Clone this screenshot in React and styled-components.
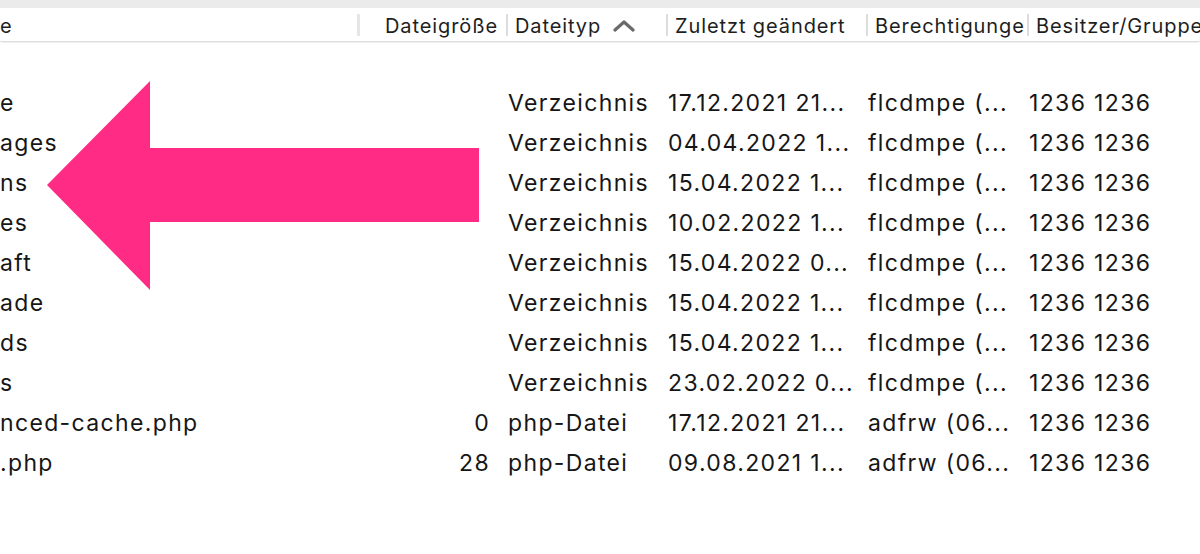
import styled, { createGlobalStyle } from "styled-components";

const GlobalStyle = createGlobalStyle`
  html, body {
    margin: 0;
    padding: 0;
    background: #fff;
  }
  body {
    font-family: Inter, "Noto Sans", sans-serif;
    color: #1c1c1c;
    overflow: hidden;
  }
`;

const Page = styled.div`
  position: relative;
  width: 1200px;
  height: 554px;
  overflow: hidden;
  background: #fff;
`;

const TopStrip = styled.div`
  height: 8px;
  background: #ebebeb;
`;

const cols = "357px 149px 160px 200px 161px 173px";

const Header = styled.div`
  display: grid;
  grid-template-columns: ${cols};
  height: 33px;
  align-items: center;
  border-bottom: 1px solid #dedede;
  box-shadow: 0 3px 0 -2px #f0f0f0;
  font-size: 20px;
  letter-spacing: 0.9px;
  color: #1e1e1e;
`;

const HeadCell = styled.div`
  position: relative;
  display: flex;
  align-items: center;
  justify-content: ${(p) => (p.$right ? "flex-end" : "flex-start")};
  gap: 12px;
  height: 100%;
  padding: ${(p) => (p.$right ? "3px 8px 0 0" : "3px 0 0 9px")};
  box-sizing: border-box;
  white-space: nowrap;
  overflow: hidden;
  &::before {
    content: "";
    display: ${(p) => (p.$first ? "none" : "block")};
    position: absolute;
    left: 0;
    top: 6px;
    bottom: 5px;
    width: ${(p) => (p.$thick ? "3px" : "2px")};
    background: ${(p) => (p.$thick ? "#e6e6e6" : "#dcdcdc")};
  }
  &:first-child {
    padding-left: 0;
  }
`;

const List = styled.div`
  padding-top: 1px;
`;

const Row = styled.div`
  display: grid;
  grid-template-columns: ${cols};
  height: 40px;
  align-items: center;
  font-size: 23px;
  letter-spacing: 1.35px;
  color: #161616;
  white-space: nowrap;
`;

const Cell = styled.div`
  overflow: hidden;
  text-align: ${(p) => (p.$right ? "right" : "left")};
  padding: ${(p) => (p.$right ? "0 16px 0 0" : "0 0 0 2px")};
  &:first-child {
    padding-left: 0;
  }
`;

const Arrow = styled.svg`
  position: absolute;
  left: 0;
  top: 0;
  pointer-events: none;
`;

const Chevron = () => (
  <svg width="22" height="14" viewBox="0 0 22 14">
    <path d="M2 11 L11 3 L20 11" fill="none" stroke="#6a6a6a" strokeWidth="3.2" strokeLinecap="round" strokeLinejoin="round" />
  </svg>
);

const rows = [
  ["", "", "", "", "", ""],
  ["e", "", "Verzeichnis", "17.12.2021 21...", "flcdmpe (...", "1236 1236"],
  ["ages", "", "Verzeichnis", "04.04.2022 1...", "flcdmpe (...", "1236 1236"],
  ["ns", "", "Verzeichnis", "15.04.2022 1...", "flcdmpe (...", "1236 1236"],
  ["es", "", "Verzeichnis", "10.02.2022 1...", "flcdmpe (...", "1236 1236"],
  ["aft", "", "Verzeichnis", "15.04.2022 0...", "flcdmpe (...", "1236 1236"],
  ["ade", "", "Verzeichnis", "15.04.2022 1...", "flcdmpe (...", "1236 1236"],
  ["ds", "", "Verzeichnis", "15.04.2022 1...", "flcdmpe (...", "1236 1236"],
  ["s", "", "Verzeichnis", "23.02.2022 0...", "flcdmpe (...", "1236 1236"],
  ["nced-cache.php", "0", "php-Datei", "17.12.2021 21...", "adfrw (06...", "1236 1236"],
  [".php", "28", "php-Datei", "09.08.2021 1...", "adfrw (06...", "1236 1236"],
];

export default function App() {
  return (
    <Page>
      <GlobalStyle />
      <TopStrip />
      <Header>
        <HeadCell $first>e</HeadCell>
        <HeadCell $thick $right>Dateigröße</HeadCell>
        <HeadCell>
          Dateityp <Chevron />
        </HeadCell>
        <HeadCell>Zuletzt geändert</HeadCell>
        <HeadCell>Berechtigunge</HeadCell>
        <HeadCell>Besitzer/Gruppe</HeadCell>
      </Header>
      <List>
        {rows.map((r, i) => (
          <Row key={i}>
            <Cell>{r[0]}</Cell>
            <Cell $right>{r[1]}</Cell>
            <Cell>{r[2]}</Cell>
            <Cell>{r[3]}</Cell>
            <Cell>{r[4]}</Cell>
            <Cell>{r[5]}</Cell>
          </Row>
        ))}
      </List>
      <Arrow width="1200" height="554" viewBox="0 0 1200 554">
        <polygon points="47,185 150,81 150,148 479,148 479,222 150,222 150,290" fill="#ff2b84" />
      </Arrow>
    </Page>
  );
}
